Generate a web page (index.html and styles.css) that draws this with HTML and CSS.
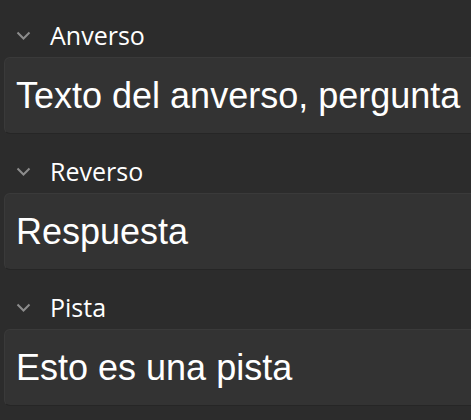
FILE: index.html
```html
<!DOCTYPE html>
<html lang="es">
<head>
<meta charset="utf-8">
<link rel="stylesheet" href="styles.css">
</head>
<body>
<div class="fields">
  <section class="field">
    <div class="field-head">
      <svg class="chev" width="15" height="9" viewBox="0 0 15 9"><path d="M1.5 1.5 L7.5 7.5 L13.5 1.5" fill="none" stroke="#8c8c8c" stroke-width="2"/></svg>
      <span class="label">Anverso</span>
    </div>
    <div class="card"><span class="value">Texto del anverso, pergunta</span></div>
  </section>
  <section class="field">
    <div class="field-head">
      <svg class="chev" width="15" height="9" viewBox="0 0 15 9"><path d="M1.5 1.5 L7.5 7.5 L13.5 1.5" fill="none" stroke="#8c8c8c" stroke-width="2"/></svg>
      <span class="label">Reverso</span>
    </div>
    <div class="card"><span class="value">Respuesta</span></div>
  </section>
  <section class="field">
    <div class="field-head">
      <svg class="chev" width="15" height="9" viewBox="0 0 15 9"><path d="M1.5 1.5 L7.5 7.5 L13.5 1.5" fill="none" stroke="#8c8c8c" stroke-width="2"/></svg>
      <span class="label">Pista</span>
    </div>
    <div class="card"><span class="value">Esto es una pista</span></div>
  </section>
</div>
</body>
</html>
```
FILE: styles.css
```css
html, body {
  margin: 0;
  padding: 0;
  background: #2c2c2c;
  overflow: hidden;
}
.fields {
  display: flex;
  flex-direction: column;
}
.field + .field {
  margin-top: 2px;
}
.field-head {
  display: flex;
  align-items: center;
  height: 44px;
  padding-top: 13px;
  box-sizing: content-box;
}
.chev {
  margin-left: 16px;
  margin-right: 19px;
  display: block;
}
.label {
  font-family: "Open Sans", "Noto Sans", sans-serif;
  font-size: 25px;
  line-height: 30px;
  color: #ffffff;
}
.card {
  margin-left: 4px;
  margin-right: -20px;
  height: 77px;
  box-sizing: border-box;
  background: #333333;
  border: 1px solid #3a3a3a;
  border-bottom-color: #262626;
  border-radius: 6px;
  display: flex;
  align-items: center;
  padding-left: 11px;
  white-space: nowrap;
}
.value {
  font-family: "Liberation Sans", Arial, sans-serif;
  font-size: 36px;
  line-height: 40px;
  color: #ffffff;
}
```
